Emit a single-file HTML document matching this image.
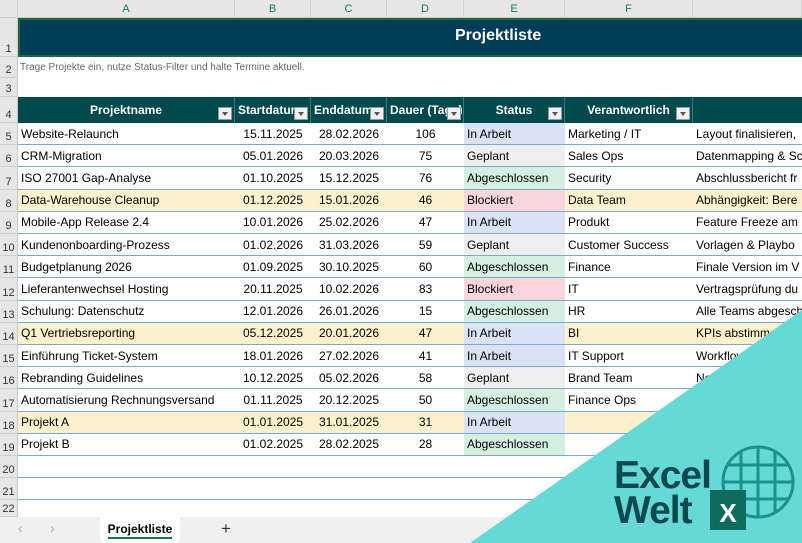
<!DOCTYPE html><html><head><meta charset="utf-8"><style>
*{margin:0;padding:0;box-sizing:border-box}
body{width:802px;height:543px;overflow:hidden;background:#fff;font-family:"Liberation Sans",Arial,sans-serif;position:relative;font-size:12px;color:#000}
.a{position:absolute}
.ch{top:0;height:18px;background:#e6e6e6;border-right:1px solid #d0d0d0;border-bottom:1px solid #c8c8c8;color:#117a65;text-align:center;line-height:18px;font-size:11px}
.rn{left:0;width:18px;background:#e6e6e6;border-bottom:1px solid #d0d0d0;border-right:1px solid #c8c8c8;color:#333;font-size:11px;text-align:center;display:flex;align-items:flex-end;justify-content:center;padding-bottom:1px}
.row{left:18px;width:784px;height:22.2px;border-bottom:1.5px solid #7aa7d6;display:flex;align-items:center}
.row div{height:100%;display:flex;align-items:center;white-space:nowrap;overflow:hidden;padding:0 3px}
.hd div{color:#fff;font-weight:bold;justify-content:center;position:relative;border-right:1px solid #3c7a7a}
.dd{position:absolute;right:2px;bottom:3px;width:14px;height:13px;background:#f0f0f0;border:1px solid #999;padding:0!important}
.dd:after{content:"";position:absolute;left:3px;top:4px;border:3px solid transparent;border-top:4px solid #555}
</style></head><body>
<div class="a ch" style="left:0;width:18px"></div>
<div class="a ch" style="left:18px;width:217px">A</div>
<div class="a ch" style="left:235px;width:76px">B</div>
<div class="a ch" style="left:311px;width:76px">C</div>
<div class="a ch" style="left:387px;width:77px">D</div>
<div class="a ch" style="left:464px;width:101px">E</div>
<div class="a ch" style="left:565px;width:128px">F</div>
<div class="a ch" style="left:693px;width:109px"></div>

<div class="a rn" style="top:18px;height:39px">1</div>
<div class="a rn" style="top:57px;height:21px">2</div>
<div class="a rn" style="top:78px;height:19px">3</div>
<div class="a rn" style="top:97px;height:26px">4</div>

<div class="a" style="left:18px;top:18px;width:784px;height:39px;background:#003d56;border:2px solid #1e6b3a;border-right:none"></div>
<div class="a" style="left:455px;top:27px;color:#fff;font-weight:bold;font-size:16px">Projektliste</div>
<div class="a" style="left:20px;top:62px;color:#666;font-size:10px">Trage Projekte ein, nutze Status-Filter und halte Termine aktuell.</div>

<div class="a row hd" style="top:97px;height:26px;background:#004a4d;border-bottom:none">
<div style="width:217px">Projektname<span class="dd"></span></div>
<div style="width:76px;justify-content:flex-start">Startdatum<span class="dd"></span></div>
<div style="width:76px;justify-content:flex-start">Enddatum<span class="dd"></span></div>
<div style="width:77px;justify-content:flex-start">Dauer (Tage)<span class="dd"></span></div>
<div style="width:101px">Status<span class="dd"></span></div>
<div style="width:128px">Verantwortlich<span class="dd"></span></div>
<div style="width:109px;border:none"></div>
</div>

<div id="rows"></div>
<script>
var d=[
["Website-Relaunch","15.11.2025","28.02.2026","106","In Arbeit","Marketing / IT","Layout finalisieren, ",0],
["CRM-Migration","05.01.2026","20.03.2026","75","Geplant","Sales Ops","Datenmapping & Sc",0],
["ISO 27001 Gap-Analyse","01.10.2025","15.12.2025","76","Abgeschlossen","Security","Abschlussbericht fr",0],
["Data-Warehouse Cleanup","01.12.2025","15.01.2026","46","Blockiert","Data Team","Abhängigkeit: Bere",1],
["Mobile-App Release 2.4","10.01.2026","25.02.2026","47","In Arbeit","Produkt","Feature Freeze am",0],
["Kundenonboarding-Prozess","01.02.2026","31.03.2026","59","Geplant","Customer Success","Vorlagen & Playbo",0],
["Budgetplanung 2026","01.09.2025","30.10.2025","60","Abgeschlossen","Finance","Finale Version im V",0],
["Lieferantenwechsel Hosting","20.11.2025","10.02.2026","83","Blockiert","IT","Vertragsprüfung du",0],
["Schulung: Datenschutz","12.01.2026","26.01.2026","15","Abgeschlossen","HR","Alle Teams abgesch",0],
["Q1 Vertriebsreporting","05.12.2025","20.01.2026","47","In Arbeit","BI","KPIs abstimmen",1],
["Einführung Ticket-System","18.01.2026","27.02.2026","41","In Arbeit","IT Support","Workflow",0],
["Rebranding Guidelines","10.12.2025","05.02.2026","58","Geplant","Brand Team","Ne",0],
["Automatisierung Rechnungsversand","01.11.2025","20.12.2025","50","Abgeschlossen","Finance Ops","",0],
["Projekt A","01.01.2025","31.01.2025","31","In Arbeit","","",1],
["Projekt B","01.02.2025","28.02.2025","28","Abgeschlossen","","",0]];
var sc={"In Arbeit":"#d9e3f3","Geplant":"#efefef","Abgeschlossen":"#d5efdf","Blockiert":"#f9d6db"};
var h="";
for(var i=0;i<17;i++){var t=123+i*22.2;
h+='<div class="a rn" style="top:'+t+'px;height:22.2px">'+(i+5)+'</div>';
if(i<15){var r=d[i];var bg=r[7]?"#fdf0cc":"#fff";
h+='<div class="a row" style="top:'+t+'px;background:'+bg+'"><div style="width:217px">'+r[0]+'</div><div style="width:76px;justify-content:center">'+r[1]+'</div><div style="width:76px;justify-content:center">'+r[2]+'</div><div style="width:77px;justify-content:center">'+r[3]+'</div><div style="width:101px;background:'+sc[r[4]]+'">'+r[4]+'</div><div style="width:128px">'+r[5]+'</div><div style="width:109px">'+r[6]+'</div></div>';}
else h+='<div class="a row" style="top:'+t+'px"></div>';}
h+='<div class="a rn" style="top:500.4px;height:17px">22</div>';
document.getElementById("rows").innerHTML=h;
</script>
<div class="a" style="left:0;top:517px;width:802px;height:26px;background:#f0f0f0"></div>
<div class="a" style="left:18px;top:520px;color:#aaa;font-size:14px">‹</div>
<div class="a" style="left:50px;top:520px;color:#aaa;font-size:14px">›</div>
<div class="a" style="left:100px;top:517px;width:80px;height:26px;background:#fff;border-radius:0 0 4px 4px;text-align:center;font-weight:bold;line-height:24px;font-size:12px">Projektliste<div style="position:absolute;left:8px;right:8px;bottom:4px;height:2px;background:#107c41"></div></div>
<div class="a" style="left:221px;top:519px;font-size:17px;color:#333">+</div>

<svg class="a" style="left:0;top:0" width="802" height="543">
<polygon points="802,310 470,543 802,543" fill="#66d9d6"/>
<g stroke="#16948c" stroke-width="3" fill="none">
<circle cx="758" cy="482" r="35"/>
<line x1="723" y1="482" x2="793" y2="482"/><line x1="727" y1="465" x2="789" y2="465"/><line x1="727" y1="499" x2="789" y2="499"/>
<line x1="758" y1="447" x2="758" y2="517"/><line x1="741" y1="452" x2="741" y2="512"/><line x1="775" y1="452" x2="775" y2="512"/>
</g>
<rect x="710" y="490" width="36" height="40" fill="#0e6b5e"/>
<text x="728" y="522" fill="#fff" font-family="Liberation Sans" font-weight="bold" font-size="26" text-anchor="middle">X</text>
<text x="614" y="488" fill="#0d4a4f" font-family="Liberation Sans" font-weight="bold" font-size="39" letter-spacing="-1">Excel</text>
<text x="614" y="523" fill="#0d4a4f" font-family="Liberation Sans" font-weight="bold" font-size="39" letter-spacing="-1">Welt</text>
</svg>
</body></html>
